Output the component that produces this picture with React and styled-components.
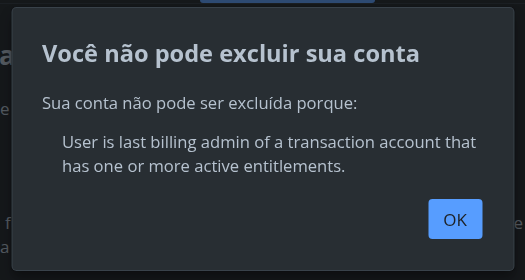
import styled, { createGlobalStyle } from "styled-components"

const GlobalStyle = createGlobalStyle`
    html, body {
        margin: 0;
        padding: 0;
        background: #1d2125;
        overflow: hidden;
    }
    * { box-sizing: border-box; }
`

export default function App() {
    return (
        <>
            <GlobalStyle />
            <Page>
                <Header>
                    <ActiveTab />
                </Header>
                <Content>
                    <PageTitle>a</PageTitle>
                    <Spacer $h={25} />
                    <PageText $indent={0}>e r</PageText>
                    <Spacer $h={90} />
                    <SplitRow>
                        <PageText $indent={5}>fu</PageText>
                        <PageText $indent={0}>e</PageText>
                    </SplitRow>
                    <PageText $indent={0}>a c</PageText>
                </Content>
            </Page>
            <Blanket />
            <Modal role="dialog" aria-modal="true">
                <ModalHeader>
                    <Title>Você não pode excluir sua conta</Title>
                </ModalHeader>
                <ModalBody>
                    <Text>Sua conta não pode ser excluída porque:</Text>
                    <Reasons>
                        <Reason>User is last billing admin of a transaction account that has one or more active entitlements.</Reason>
                    </Reasons>
                </ModalBody>
                <ModalFooter>
                    <Button type="button">OK</Button>
                </ModalFooter>
            </Modal>
        </>
    )
}

const Page = styled.div`
    height: 100vh;
    overflow: hidden;
    font-family: "Open Sans", "Noto Sans", sans-serif;
    color: #b6c2cf;
`

const Header = styled.div`
    height: 4px;
    border-bottom: 1px solid #2c333a;
    display: flex;
    justify-content: flex-start;
    padding-left: 200px;
`

const ActiveTab = styled.div`
    width: 175px;
    height: 3px;
    background: #579dff;
    border-radius: 0 0 3px 3px;
`

const Content = styled.div`
    padding-top: 34px;
    display: flex;
    flex-direction: column;
`

const PageTitle = styled.div`
    font-size: 27px;
    font-weight: 700;
    line-height: 34px;
    margin-left: -1px;
`

const PageText = styled.div`
    font-size: 17px;
    line-height: 24px;
    padding-left: ${p => p.$indent}px;
    white-space: nowrap;
`

const Spacer = styled.div`
    height: ${p => p.$h}px;
`

const SplitRow = styled.div`
    display: flex;
    justify-content: space-between;
    padding-right: 2px;
`

const Blanket = styled.div`
    position: fixed;
    inset: 0;
    background: rgba(16, 18, 20, 0.6);
`

const Modal = styled.section`
    position: fixed;
    top: 8px;
    left: 50%;
    transform: translateX(-50%);
    width: 501px;
    background: #282e33;
    border-radius: 4px;
    box-shadow: 0 0 0 1px #39424a, 0 8px 12px rgba(3, 4, 4, 0.36), 0 0 1px 1px rgba(3, 4, 4, 0.5);
    font-family: "Open Sans", "Noto Sans", sans-serif;
    color: #b6c2cf;
    display: flex;
    flex-direction: column;
`

const ModalHeader = styled.header`
    padding: 30px 30px 22px;
`

const Title = styled.h1`
    margin: 0;
    font-size: 23.6px;
    line-height: 30px;
    font-weight: 700;
    color: #b6c2cf;
`

const ModalBody = styled.div`
    padding: 0 30px;
`

const Text = styled.p`
    margin: 0;
    font-size: 16.6px;
    line-height: 25px;
`

const Reasons = styled.ul`
    list-style: none;
    margin: 15px 0 0;
    padding: 0 0 0 20px;
`

const Reason = styled.li`
    font-size: 16.6px;
    line-height: 24px;
`

const ModalFooter = styled.footer`
    display: flex;
    justify-content: flex-end;
    padding: 21px 31px 31px;
`

const Button = styled.button`
    height: 40px;
    padding: 0 15px;
    border: none;
    border-radius: 4px;
    background: #579dff;
    color: #1d2125;
    font-family: "Open Sans", "Noto Sans", sans-serif;
    font-size: 17px;
    font-weight: 500;
    cursor: pointer;
`
